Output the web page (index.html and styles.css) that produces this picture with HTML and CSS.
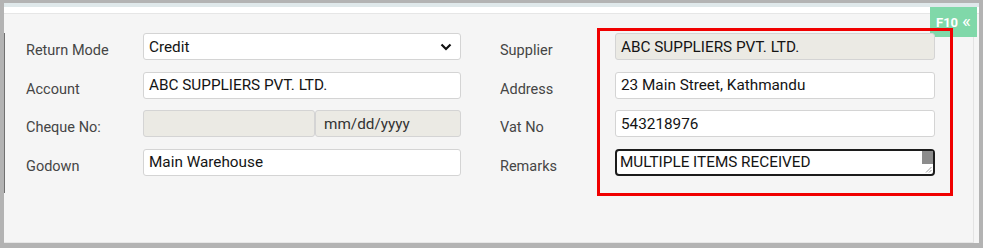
FILE: index.html
```html
<!DOCTYPE html>
<html lang="en">
<head>
  <meta charset="UTF-8">
  <title>Purchase Return</title>
  <link rel="stylesheet" href="styles.css">
</head>
<body>
  <div class="window">
    <div class="topbar"></div>
    <div class="whitebar"></div>
    <div class="panel">
      <div class="badge">F10 <span class="chev">&laquo;</span></div>
      <div class="form">
        <div class="grid left">
          <label>Return Mode</label>
          <div class="select-wrap">
            <div class="field">Credit</div>
            <svg class="caret" width="12" height="8" viewBox="0 0 12 8"><path d="M1.5 1.5 L6 6 L10.5 1.5" fill="none" stroke="#111" stroke-width="2.2"/></svg>
          </div>
          <label>Account</label>
          <div class="field">ABC SUPPLIERS PVT. LTD.</div>
          <label>Cheque No:</label>
          <div class="pair">
            <div class="field disabled"></div>
            <div class="field disabled date">mm/dd/yyyy</div>
          </div>
          <label>Godown</label>
          <div class="field">Main Warehouse</div>
        </div>
        <div class="right">
          <div class="labels">
            <label>Supplier</label>
            <label>Address</label>
            <label>Vat No</label>
            <label>Remarks</label>
          </div>
          <div class="highlight">
            <div class="field disabled">ABC SUPPLIERS PVT. LTD.</div>
            <div class="field">23 Main Street, Kathmandu</div>
            <div class="field">543218976</div>
            <div class="field textarea">
              MULTIPLE ITEMS RECEIVED
              <span class="thumb"></span>
              <svg class="grip" width="7" height="7" viewBox="0 0 7 7"><path d="M6.5 1 L1 6.5 M6.5 4 L4 6.5" stroke="#999" stroke-width="1"/></svg>
            </div>
          </div>
        </div>
      </div>
    </div>
  </div>
</body>
</html>
```

FILE: styles.css
```css
body {
  margin: 0;
  background: #b3b3b3;
  font-family: Roboto, "Liberation Sans", sans-serif;
}
.window {
  margin: 3px 4px 5px 4px;
  height: 240px;
  background: #f5f5f5;
  display: flex;
  flex-direction: column;
}
.topbar {
  height: 4px;
  background: #dfe8ea;
}
.whitebar {
  height: 6px;
  background: #ffffff;
  border-bottom: 1px solid #e6e6e6;
}
.panel {
  flex: 1;
  position: relative;
  margin-right: 5px;
  border-right: 1px solid #e3e3e3;
  border-bottom: 1px solid #e6e6e6;
  padding-top: 14px;
}
.badge {
  position: absolute;
  top: -7px;
  right: -4px;
  width: 47px;
  height: 30px;
  background: #80d8a9;
  color: #ffffff;
  font-size: 13px;
  font-weight: bold;
  display: flex;
  align-items: center;
  justify-content: center;
  gap: 4px;
}
.chev {
  font-size: 19px;
  font-weight: normal;
  line-height: 1;
  margin-top: -3px;
}
.form {
  position: relative;
  display: flex;
  align-items: flex-start;
}
.form::before {
  content: "";
  position: absolute;
  left: 0;
  top: 5px;
  bottom: 3px;
  width: 1px;
  background: #707070;
}
.grid {
  display: grid;
  grid-template-columns: 117px 318px;
  grid-auto-rows: 27px;
  row-gap: 11.5px;
}
.left {
  padding: 5px 0 0 22px;
}
label {
  font-size: 14.5px;
  color: #454545;
  display: flex;
  align-items: center;
  height: 27px;
  padding-top: 8px;
  box-sizing: border-box;
}
.field {
  height: 27px;
  box-sizing: border-box;
  border: 1px solid #d4d4d4;
  border-radius: 3px;
  background: #ffffff;
  font-size: 15.3px;
  color: #141414;
  padding: 0 5px;
  display: flex;
  align-items: center;
}
.field.disabled {
  background: #ebeae4;
}
.select-wrap {
  position: relative;
}
.caret {
  position: absolute;
  right: 9px;
  top: 10px;
}
.pair {
  display: flex;
}
.pair .field:first-child {
  width: 172px;
}
.pair .date {
  flex: 1;
  color: #333;
  padding-left: 8px;
}
.right {
  display: flex;
  margin-left: 39px;
}
.labels {
  width: 97px;
  padding-top: 5px;
  display: flex;
  flex-direction: column;
  gap: 11.5px;
}
.highlight {
  width: 320px;
  border: 3px solid #f00000;
  padding: 2px 15px 17px 15px;
  display: flex;
  flex-direction: column;
  gap: 11.5px;
}
.textarea {
  position: relative;
  border: 2px solid #1c1c1c;
  border-radius: 4px;
  padding-left: 3px;
}
.thumb {
  position: absolute;
  right: 0;
  top: 0;
  width: 11px;
  height: 13px;
  background: #8c8c8c;
}
.grip {
  position: absolute;
  right: 1px;
  bottom: 1px;
}
```
